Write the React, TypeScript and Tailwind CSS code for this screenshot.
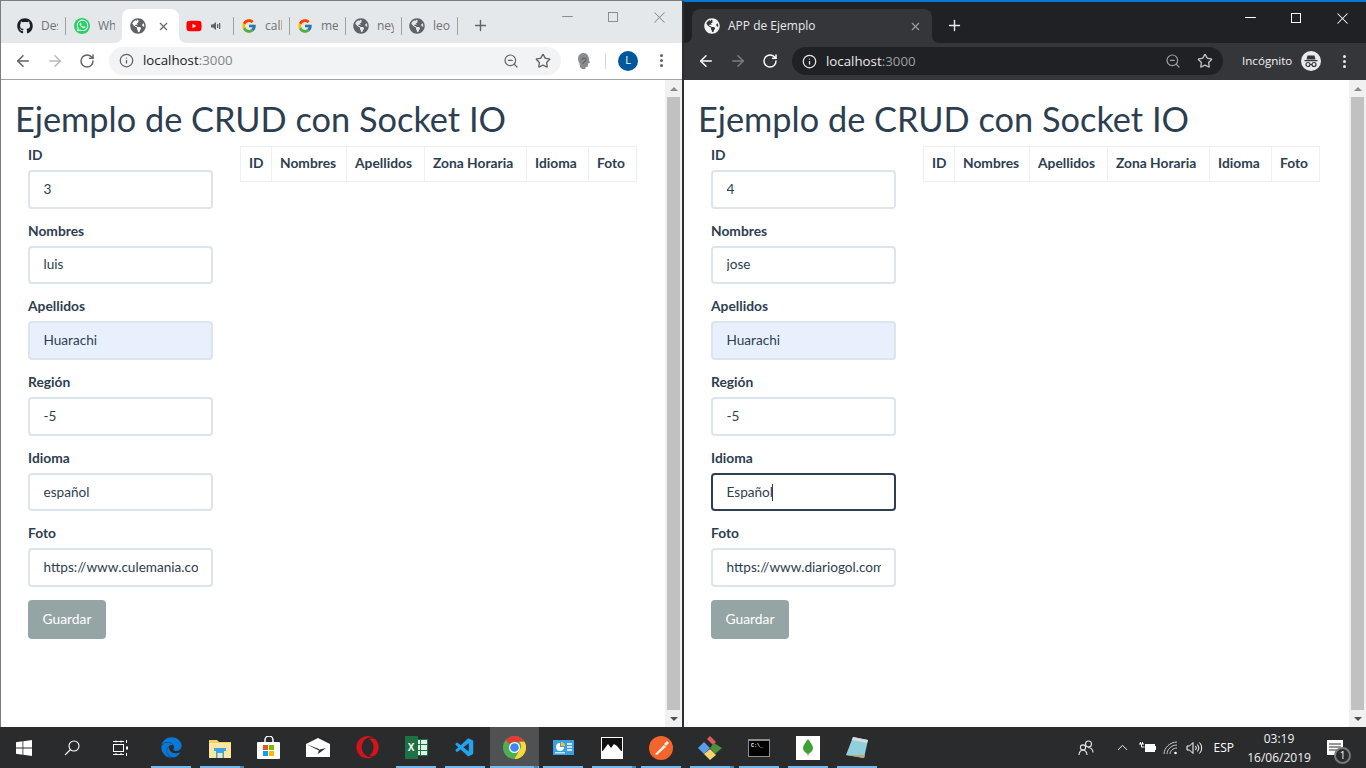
import React from "react";
import { ArrowLeft, ArrowRight, RotateCw, Info, ZoomOut, Star, Plus, X, Minus, ChevronUp } from "lucide-react";
import { FaGithub, FaWhatsapp, FaYoutube, FaGlobeAmericas, FaEdge, FaOpera } from "react-icons/fa";
import { FcGoogle } from "react-icons/fc";
import { VscVscode } from "react-icons/vsc";

type Field = { label: string; value: string; tone?: "autofill" | "focus" };

const leftFields: Field[] = [
  { label: "ID", value: "3" },
  { label: "Nombres", value: "luis" },
  { label: "Apellidos", value: "Huarachi", tone: "autofill" },
  { label: "Región", value: "-5" },
  { label: "Idioma", value: "español" },
  { label: "Foto", value: "https://www.culemania.com/fotos/messi.jpg" },
];
const rightFields: Field[] = [
  { label: "ID", value: "4" },
  { label: "Nombres", value: "jose" },
  { label: "Apellidos", value: "Huarachi", tone: "autofill" },
  { label: "Región", value: "-5" },
  { label: "Idioma", value: "Español", tone: "focus" },
  { label: "Foto", value: "https://www.diariogol.com/fotos/jose.jpg" },
];
const columns = [
  { name: "ID", width: "w-[31px]" },
  { name: "Nombres", width: "w-[75px]" },
  { name: "Apellidos", width: "w-[78px]" },
  { name: "Zona Horaria", width: "w-[102px]" },
  { name: "Idioma", width: "w-[62px]" },
  { name: "Foto", width: "w-[48px]" },
];

function FormField({ f }: { f: Field }) {
  const tone =
    f.tone === "focus" ? "border-[#2c3e50] bg-white" : f.tone === "autofill" ? "border-[#dce4ec] bg-[#e8f0fe]" : "border-[#dce4ec] bg-white";
  return (
    <div className="mb-[11.2px]">
      <label className="block h-[22.5px] mb-[3.5px] font-bold text-[13.8px] leading-[22.5px] text-[#2c3e50]">{f.label}</label>
      <div className="relative">
        <input readOnly value={f.value} className={`block w-full h-[38.5px] border-2 rounded-[4px] px-[13.5px] pb-[1px] text-[13.6px] text-[#2c3e50] outline-none ${tone}`} style={{ fontFamily: "Lato, sans-serif" }} />
        {f.tone === "focus" && <span className="absolute left-[61px] top-[11px] w-px h-[17px] bg-[#2c3e50]" />}
      </div>
    </div>
  );
}

function Scrollbar() {
  return (
    <div className="w-[17px] shrink-0 bg-[#f1f1f1] flex flex-col items-center">
      <div className="h-[17px] flex items-center justify-center">
        <div className="w-0 h-0 border-x-[4px] border-x-transparent border-b-[4px] border-b-[#8a8a8a]" />
      </div>
      <div className="w-[13px] flex-1 bg-[#c1c1c1]" />
      <div className="h-[17px] flex items-center justify-center">
        <div className="w-0 h-0 border-x-[4px] border-x-transparent border-t-[4px] border-t-[#505050]" />
      </div>
    </div>
  );
}

function Page({ fields }: { fields: Field[] }) {
  return (
    <div className="flex-1 flex min-h-0 bg-white" style={{ fontFamily: "Lato, sans-serif" }}>
      <div className="flex-1 pl-[14px]">
        <h1 className="mt-[15px] h-[49px] text-[34.35px] leading-[48px] text-[#2c3e50]">Ejemplo de CRUD con Socket IO</h1>
        <div className="flex pl-[13px] gap-[27px]">
          <div className="w-[185px]">
            {fields.map((f) => (
              <FormField key={f.label} f={f} />
            ))}
            <button className="mt-[1.8px] h-[39px] w-[78px] rounded-[4px] bg-[#95a5a6] text-white text-[13.8px]">Guardar</button>
          </div>
          <table className="self-start mt-[2px] border-collapse table-fixed w-[396px] text-[13.8px] text-[#2c3e50]">
            <thead>
              <tr>
                {columns.map((c) => (
                  <th key={c.name} className={`border border-[#ecf0f1] pl-2 pr-0 pb-[1px] h-[35px] font-bold text-left whitespace-nowrap ${c.width}`}>{c.name}</th>
                ))}
              </tr>
            </thead>
          </table>
        </div>
      </div>
      <Scrollbar />
    </div>
  );
}

function Tab({ children }: { children: React.ReactNode }) {
  return (
    <div className="w-[56px] h-[18px] shrink-0 flex items-center pl-[7px] border-r border-[#9da1a6] gap-[8px]">{children}</div>
  );
}

function TabLabel({ text }: { text: string }) {
  return <span className="w-[17px] overflow-hidden whitespace-nowrap text-[12px] text-[#6f7276]">{text}</span>;
}

function Globe({ className }: { className: string }) {
  return <FaGlobeAmericas size={16} className={className} />;
}

function TabCorner({ color, flip }: { color: string; flip?: boolean }) {
  return (
    <svg width="8" height="8" viewBox="0 0 8 8" className={flip ? "absolute -right-[8px] bottom-0" : "absolute -left-[8px] bottom-0"}>
      <path d={flip ? "M0 0 Q0 8 8 8 L0 8Z" : "M8 0 Q8 8 0 8 L8 8Z"} fill={color} />
    </svg>
  );
}

function WindowButtons({ color, edge }: { color: string; edge: string }) {
  return (
    <div className="ml-auto self-start flex mt-[7px]" style={{ color }}>
      <div className="w-[46px] flex justify-center"><Minus size={17} strokeWidth={1.500} /></div>
      <div className="w-[46px] h-[17px] flex items-center justify-center"><div className="w-[10px] h-[10px] border border-current" /></div>
      <div className={`w-[46px] flex justify-center ${edge}`}><X size={19} strokeWidth={1.300} /></div>
    </div>
  );
}

function LeftStrip() {
  return (
    <div className="h-[42px] bg-[#e5e8eb] flex items-end pl-[9px]">
      <div className="flex items-center h-[34px] pb-[1px]">
        <Tab><FaGithub size={16} className="text-[#1b1f23]" /><TabLabel text="Des" /></Tab>
        <div className="w-[56px] h-[18px] shrink-0 flex items-center pl-[8px] gap-[8px]"><div className="w-[16px] h-[16px] rounded-full bg-[#25d366] flex items-center justify-center"><FaWhatsapp size={13} className="text-white" /></div><TabLabel text="Wh" /></div>
      </div>
      <div className="relative w-[57px] h-[34px] bg-white rounded-t-[8px] flex items-center pl-[8px] text-[#5f6368]">
        <TabCorner color="#ffffff" />
        <TabCorner color="#ffffff" flip />
        <Globe className="text-[#5f6368]" />
        <X size={13} strokeWidth={2} className="ml-[11px]" />
      </div>
      <div className="flex items-center h-[34px] pb-[1px]">
        <div className="w-[55px] h-[18px] shrink-0 flex items-center pl-[7px] gap-[9px] border-r border-[#9da1a6]"><FaYoutube size={16} className="text-[#f00]" /><svg width="10" height="10" viewBox="0 0 10 10" fill="#5f6368"><path d="M0 3.500h2L5 1v8L2 6.500H0z" /><rect x="6" y="3" width="1.300" height="4" /><rect x="8" y="2" width="1.300" height="6" /></svg></div>
        <Tab><FcGoogle size={16} /><TabLabel text="call" /></Tab>
        <Tab><FcGoogle size={16} /><TabLabel text="me" /></Tab>
        <Tab><Globe className="text-[#5f6368]" /><TabLabel text="ney" /></Tab>
        <Tab><Globe className="text-[#5f6368]" /><TabLabel text="leo" /></Tab>
        <Plus size={17} strokeWidth={2} className="ml-[14px] text-[#5f6368]" />
      </div>
      <div className="self-stretch flex-1 flex"><WindowButtons color="#8a8d91" edge="mr-0" /></div>
    </div>
  );
}

function RightStrip() {
  return (
    <div className="h-[41px] bg-[#202124] flex items-end pl-[8px]">
      <div className="relative w-[240px] h-[34px] bg-[#35363a] rounded-t-[8px] flex items-center pl-[12px] text-white">
        <TabCorner color="#35363a" />
        <TabCorner color="#35363a" flip />
        <Globe className="text-[#f1f3f4]" />
        <span className="ml-[8px] text-[12px] text-[#e8eaed]">APP de Ejemplo</span>
        <X size={13} strokeWidth={2} className="ml-auto mr-[10px] text-[#9aa0a6]" />
      </div>
      <Plus size={17} strokeWidth={2} className="ml-[14px] mb-[9px] text-[#e8eaed]" />
      <div className="self-stretch flex-1 flex"><WindowButtons color="#ffffff" edge="mr-[1px]" /></div>
    </div>
  );
}

function Omnibox({ dark }: { dark?: boolean }) {
  return (
    <div className={`flex-1 h-[28px] rounded-full flex items-center pl-[10px] pr-[10px] ${dark ? "bg-[#202124]" : "bg-[#f1f3f4]"}`}>
      <Info size={15} strokeWidth={2} className={dark ? "text-[#e8eaed]" : "text-[#5f6368]"} />
      <span className="ml-[9px] mt-[1px] text-[13.3px]" style={{ fontFamily: "'Open Sans', sans-serif" }}>
        <span className={dark ? "text-[#e8eaed]" : "text-[#202124]"}>localhost</span>
        <span className={dark ? "text-[#9aa0a6]" : "text-[#80868b]"}>:3000</span>
      </span>
      <ZoomOut size={16} strokeWidth={1.800} className={`ml-auto ${dark ? "text-[#9aa0a6]" : "text-[#5f6368]"}`} />
      <Star size={16} strokeWidth={2} className={`ml-[16px] ${dark ? "text-[#bdc1c6]" : "text-[#5f6368]"}`} />
    </div>
  );
}

function Dots({ color }: { color: string }) {
  return (
    <div className="flex flex-col gap-[2px]">
      <span className={`w-[3px] h-[3px] rounded-full ${color}`} />
      <span className={`w-[3px] h-[3px] rounded-full ${color}`} />
      <span className={`w-[3px] h-[3px] rounded-full ${color}`} />
    </div>
  );
}

function LeftToolbar() {
  return (
    <div className="h-[37px] bg-white border-b border-[#a3a3a3] flex items-center pl-[13px] pb-[1px] text-[#5f6368]">
      <ArrowLeft size={18} strokeWidth={2} />
      <ArrowRight size={18} strokeWidth={2} className="ml-[14px] text-[#b8babc]" />
      <RotateCw size={16} strokeWidth={2.200} className="ml-[15px]" />
      <div className="ml-[14px] w-[452px] flex"><Omnibox /></div>
      <svg width="16" height="18" viewBox="0 0 16 18" className="ml-[15px]">
        <path d="M8 1C4 1 2 3.500 2 7c0 2 1 3 1.500 4.500L4 15l2 2h3l1-2 2-.500v-3l2-.500-1-3C13 4 11 1 8 1z" fill="#8a8d90" />
        <path d="M6 8c0-2 4-3 4-.500S7 10 7 12" stroke="#5f6368" strokeWidth="1.200" fill="none" />
      </svg>
      <div className="ml-[13px] w-px h-[16px] bg-[#d3d5d7]" />
      <div className="ml-[12px] w-[20px] h-[20px] rounded-full bg-[#01579b] text-white text-[11px] flex items-center justify-center" style={{ fontFamily: "'Open Sans', sans-serif" }}>L</div>
      <div className="ml-[22px]"><Dots color="bg-[#5f6368]" /></div>
    </div>
  );
}

function RightToolbar() {
  return (
    <div className="h-[37px] bg-[#35363a] flex items-center pl-[13px] pb-[1px] text-white">
      <ArrowLeft size={18} strokeWidth={2} />
      <ArrowRight size={18} strokeWidth={2} className="ml-[14px] text-[#7b7d81]" />
      <RotateCw size={16} strokeWidth={2.200} className="ml-[15px]" />
      <div className="ml-[14px] w-[431px] flex"><Omnibox dark /></div>
      <span className="ml-[19px] text-[11.6px] text-[#f1f3f4]" style={{ fontFamily: "'Open Sans', sans-serif" }}>Incógnito</span>
      <svg width="20" height="20" viewBox="0 0 20 20" className="ml-[9px]">
        <circle cx="10" cy="10" r="10" fill="#e8eaed" />
        <path d="M6.500 4.500h7l1 4h-9zM3.500 9h13v1.200h-13z" fill="#35363a" />
        <circle cx="7" cy="13.500" r="2" fill="none" stroke="#35363a" strokeWidth="1.200" />
        <circle cx="13" cy="13.500" r="2" fill="none" stroke="#35363a" strokeWidth="1.200" />
        <path d="M9 13.500h2" stroke="#35363a" strokeWidth="1" />
      </svg>
      <div className="ml-[22px]"><Dots color="bg-[#e8eaed]" /></div>
    </div>
  );
}

function TaskCell({ children, active, stacked, running = true }: { children: React.ReactNode; active?: boolean; stacked?: boolean; running?: boolean }) {
  return (
    <div className={`relative w-[49px] h-full shrink-0 flex items-center justify-center ${active ? "bg-[#4f5153]" : ""}`}>
      {children}
      {running && <span className={`absolute bottom-0 h-[2px] bg-[#76b9ed] ${active ? "left-0 right-0" : "left-[4px] w-[40px]"}`} />}
      {stacked && <span className="absolute bottom-0 left-[44px] w-[4px] h-[2px] bg-[#4f87b0]" />}
    </div>
  );
}

const icons = {
  folder: (
    <svg width="22" height="20" viewBox="0 0 22 20"><path d="M0 2h8l2 2h12v16H0z" fill="#f3cf6a" /><path d="M0 5h22v15H0z" fill="#fbe6a2" /><path d="M5 10h12v3h-2v7H7v-7H5z" fill="#37a6e8" /><rect x="8.500" y="15" width="5" height="5" fill="#fbe6a2" /></svg>
  ),
  store: (
    <svg width="24" height="24" viewBox="0 0 24 24"><path d="M8 7V4a4 4 0 018 0v3" fill="none" stroke="#fff" strokeWidth="1.500" /><rect y="6" width="23" height="17" rx="1" fill="#fff" /><rect x="6" y="9" width="5" height="5" fill="#f25022" /><rect x="12" y="9" width="5" height="5" fill="#7fba00" /><rect x="6" y="15" width="5" height="5" fill="#00a4ef" /><rect x="12" y="15" width="5" height="5" fill="#ffb900" /></svg>
  ),
  mail: (
    <svg width="24" height="20" viewBox="0 0 24 20"><path d="M0 6L12 0l12 6v13H0z" fill="#fff" /><path d="M0 6l12 6 8-2-8 6 1-5z" fill="#2b2b2b" /></svg>
  ),
  excel: (
    <div className="relative w-[23px] h-[23px]">
      <div className="absolute right-0 top-[3px] w-[14px] h-[17px] bg-[#1e7145] p-[1px] grid grid-cols-2 gap-[1px]">
        <span className="bg-[#dff0e6]" /><span className="bg-[#dff0e6]" /><span className="bg-[#dff0e6]" /><span className="bg-[#dff0e6]" /><span className="bg-[#dff0e6]" /><span className="bg-[#dff0e6]" />
      </div>
      <div className="absolute left-0 top-0 w-[13px] h-[23px] bg-[#1e7145] text-white text-[10px] font-bold flex items-center justify-center" style={{ fontFamily: "'Liberation Sans', sans-serif" }}>X</div>
    </div>
  ),
  chrome: (
    <svg width="23" height="23" viewBox="0 0 24 24"><circle cx="12" cy="12" r="12" fill="#4caf50" /><path d="M12 0a12 12 0 0110.400 6H12a6 6 0 00-5.200 3L3.200 3.800A12 12 0 0112 0z" fill="#e53935" /><path d="M22.400 6A12 12 0 0112 24l5.200-9a6 6 0 00-.400-9z" fill="#fdd835" /><circle cx="12" cy="12" r="5.800" fill="#fff" /><circle cx="12" cy="12" r="4.500" fill="#4285f4" /></svg>
  ),
  panel: (
    <svg width="21" height="15" viewBox="0 0 21 15"><rect width="21" height="15" fill="#3aa0e0" /><path d="M7 3a4 4 0 104 4H7z" fill="#fff" /><path d="M8 2a4 4 0 014 4H8z" fill="#f5b942" /><path d="M14 4h5M14 7h5M14 10h5" stroke="#fff" strokeWidth="1.500" /><rect x="2" y="12" width="10" height="1.500" fill="#bfe3f8" /></svg>
  ),
  photos: (
    <svg width="22" height="22" viewBox="0 0 22 22"><rect width="22" height="22" fill="#fff" /><rect x="1" y="1" width="20" height="13" fill="#111" /><path d="M1 15l6-8 3 4 3-4 3 2 5 6v6H1z" fill="#fff" /></svg>
  ),
  postman: (
    <svg width="24" height="24" viewBox="0 0 24 24"><circle cx="12" cy="12" r="12" fill="#f4652c" /><path d="M6 18l9-9 2 2-9 8zM15 8l3-3 2 2-3 3z" fill="#fff" opacity=".9" /></svg>
  ),
  kraken: (
    <svg width="24" height="24" viewBox="0 0 24 24"><path d="M9 3l3-3 6 6-3 3z" fill="#e05a5a" /><path d="M6 6l6 6-6 6-6-6z" fill="#5b9bf0" /><path d="M16 7l8 5-7 6-5-6z" fill="#4f8f3f" /><path d="M6 18l6-5 6 6-6 5z" fill="#f5d76e" /></svg>
  ),
  cmd: (
    <div className="w-[22px] h-[18px] bg-black border border-[#8d8d8d] border-t-[2px] flex items-start pl-[2px] pt-[2px]">
      <span className="text-[5px] leading-[6px] text-white font-bold" style={{ fontFamily: "'Liberation Mono', monospace" }}>C:\_</span>
    </div>
  ),
  mongo: (
    <div className="w-[24px] h-[24px] bg-white flex items-center justify-center">
      <svg width="10" height="18" viewBox="0 0 10 18"><path d="M5 0C7 3 10 6 10 9c0 3-3 5-4.500 6L5 18l-.500-3C3 14 0 12 0 9c0-3 3-6 5-9z" fill="#3fa037" /></svg>
    </div>
  ),
  notes: (
    <svg width="22" height="24" viewBox="0 0 22 24"><path d="M7 1l15 3-4 18L0 19z" fill="#8fd0dc" /><path d="M7 1l15 3-1 3L6 4z" fill="#dcdcdc" /><path d="M0 19l18 3 1-3z" fill="#c2a878" /></svg>
  ),
};

function Taskbar() {
  return (
    <div className="h-[41px] bg-[#2a2b2d] flex items-center text-white shrink-0" style={{ fontFamily: "'Open Sans', sans-serif" }}>
      <div className="w-[48px] flex justify-center">
        <svg width="16" height="16" viewBox="0 0 16 16" fill="#fff"><path d="M0 2.300l6.500-1v6.300H0zM7.300 1.200L16 0v7.600H7.300zM0 8.400h6.500v6.300l-6.500-1zM7.300 8.400H16V16l-8.700-1.200z" /></svg>
      </div>
      <div className="w-[48px] flex justify-center">
        <svg width="16" height="16" viewBox="0 0 16 16" fill="none" stroke="#fff" strokeWidth="1.100"><circle cx="10" cy="6" r="5" /><path d="M6.500 9.500L1 15" /></svg>
      </div>
      <div className="w-[50.500px] flex justify-center">
        <svg width="16" height="16" viewBox="0 0 16 16" fill="none" stroke="#fff" strokeWidth="1"><rect x="0.500" y="4.500" width="10" height="7" /><path d="M0 1.500h11M0 14.500h11" /><path d="M13.500 0v3M13.500 13v3" /><rect x="13" y="6.500" width="2" height="3" fill="#fff" stroke="none" /><path d="M3 .5v2M8 .5v2M3 13v2M8 13v2" /></svg>
      </div>
      <TaskCell><FaEdge size={21} className="text-[#0a78d7]" /></TaskCell>
      <TaskCell stacked>{icons.folder}</TaskCell>
      <TaskCell running={false}>{icons.store}</TaskCell>
      <TaskCell running={false}>{icons.mail}</TaskCell>
      <TaskCell running={false}><FaOpera size={23} className="text-[#d5121e]" /></TaskCell>
      <TaskCell>{icons.excel}</TaskCell>
      <TaskCell><VscVscode size={22} className="text-[#23a3ee]" /></TaskCell>
      <TaskCell active stacked>{icons.chrome}</TaskCell>
      <TaskCell>{icons.panel}</TaskCell>
      <TaskCell stacked>{icons.photos}</TaskCell>
      <TaskCell>{icons.postman}</TaskCell>
      <TaskCell stacked>{icons.kraken}</TaskCell>
      <TaskCell>{icons.cmd}</TaskCell>
      <TaskCell>{icons.mongo}</TaskCell>
      <TaskCell>{icons.notes}</TaskCell>
      <div className="ml-auto flex items-center h-full">
        <svg width="16" height="16" viewBox="0 0 16 16" fill="none" stroke="#e6e6e6" strokeWidth="1.100"><circle cx="10.500" cy="4" r="3" /><circle cx="5" cy="7.500" r="2.600" /><path d="M1 15c0-3 2-5 4-5s4 2 4 5M10 7.500c3 0 5 2 5 5" /></svg>
        <ChevronUp size={17} strokeWidth={1.300} className="ml-[20px] text-white" />
        <svg width="17" height="12" viewBox="0 0 17 12" className="ml-[8px]"><path d="M0 2h5M1.500 0v2M3.500 0v2M2.500 2v3h3" stroke="#fff" strokeWidth="1" fill="none" /><rect x="6" y="2" width="10" height="8" fill="#fff" /><rect x="16" y="4" width="1" height="4" fill="#fff" /></svg>
        <svg width="16" height="14" viewBox="0 0 16 14" fill="none" stroke="#c8c8c8" strokeWidth="1" className="ml-[7px]"><path d="M1 13C1 7 7 1 14 1M4 13c0-4 4-9 10-9M7 13c0-3 3-6 7-6" /><circle cx="12.500" cy="12" r="1.300" fill="#fff" stroke="none" /></svg>
        <svg width="17" height="14" viewBox="0 0 17 14" fill="none" stroke="#fff" strokeWidth="1" className="ml-[7px]"><path d="M1 5h2.500L7 1.500v11L3.500 9H1z" /><path d="M9.500 5a3 3 0 010 4M11.500 3.500a5.500 5.500 0 010 7M13.500 1.500a8 8 0 010 11" /></svg>
        <span className="ml-[11px] text-[12px]">ESP</span>
        <div className="ml-[14px] w-[62px] flex flex-col items-center text-[12px] leading-[19px] text-[#f2f2f2]">
          <span>03:19</span>
          <span>16/06/2019</span>
        </div>
        <div className="relative ml-[17px] mr-[23px] w-[16px] h-[15px] bg-white">
          <svg width="16" height="15" viewBox="0 0 16 15" stroke="#2a2b2d" strokeWidth="1"><path d="M2 4h12M2 7h12M2 10h8" /></svg>
          <span className="absolute left-[7px] top-[7px] w-[17px] h-[17px] rounded-full border-2 border-[#7a7a7a] bg-[#2a2b2d] text-[10px] leading-[13px] text-center text-white">1</span>
        </div>
      </div>
    </div>
  );
}

export default function App() {
  return (
    <div className="w-[1366px] h-[768px] overflow-hidden flex flex-col">
      <div className="flex-1 flex min-h-0">
        <div className="w-[682px] flex flex-col border-l border-t border-[#7d7d7d]" style={{ fontFamily: "'Open Sans', sans-serif" }}>
          <LeftStrip />
          <LeftToolbar />
          <Page fields={leftFields} />
        </div>
        <div className="w-[684px] flex flex-col border-t-2 border-t-[#0078d7] border-l-2 border-l-[#2b2e33]" style={{ fontFamily: "'Open Sans', sans-serif" }}>
          <RightStrip />
          <RightToolbar />
          <Page fields={rightFields} />
        </div>
      </div>
      <Taskbar />
    </div>
  );
}
